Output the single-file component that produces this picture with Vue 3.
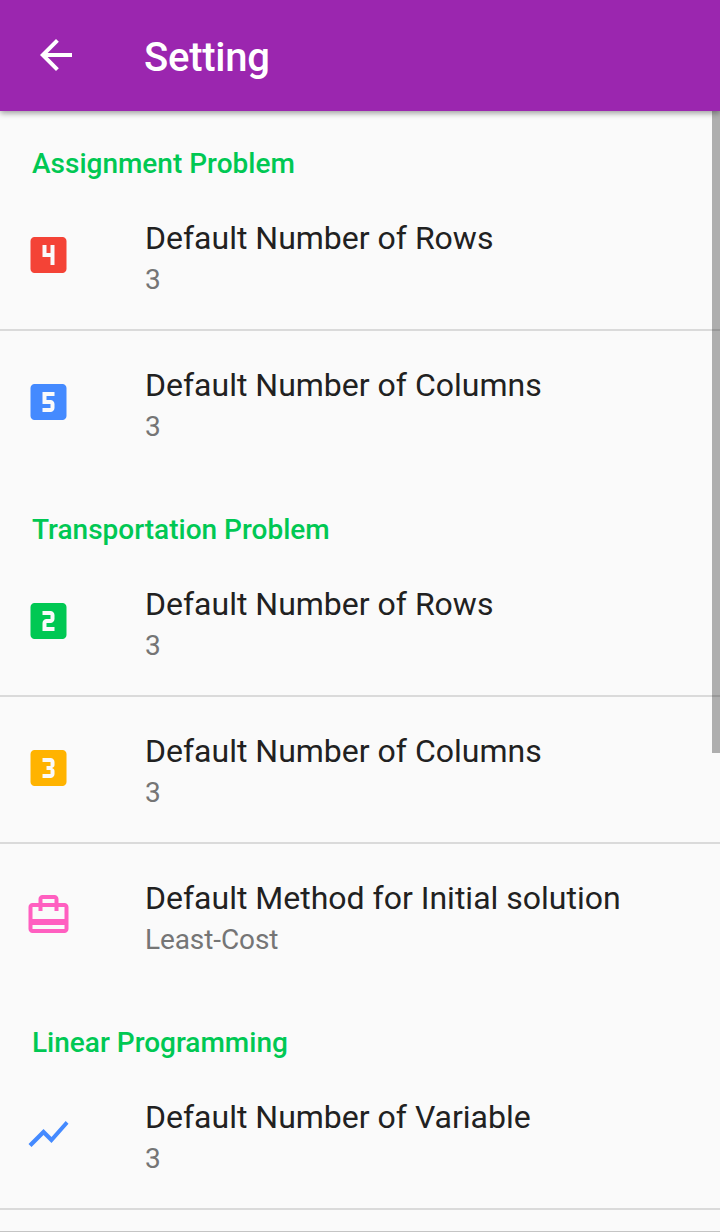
<script setup>
const box = 'M19 3H5c-1.1 0-2 .9-2 2v14c0 1.1.9 2 2 2h14c1.1 0 2-.9 2-2V5c0-1.1-.9-2-2-2z'
const icons = {
  two: box + 'm-4 8c0 1.11-.9 2-2 2h-2v2h4v2H9v-4c0-1.11.9-2 2-2h2V9H9V7h4c1.1 0 2 .89 2 2v2z',
  three: 'M19.01 3h-14c-1.1 0-2 .9-2 2v14c0 1.1.9 2 2 2h14c1.1 0 2-.9 2-2V5c0-1.1-.9-2-2-2zm-4 7.5c0 .83-.67 1.5-1.5 1.5.83 0 1.5.67 1.5 1.5V15c0 1.11-.9 2-2 2h-4v-2h4v-2h-2v-2h2V9h-4V7h4c1.1 0 2 .89 2 2v1.5z',
  four: box + 'm-4 14h-2v-4H9V7h2v4h2V7h2v10z',
  five: box + 'm-4 6h-4v2h2c1.1 0 2 .89 2 2v2c0 1.11-.9 2-2 2H9v-2h4v-2H9V7h6v2z',
  trip: 'M20 6h-3V4c0-1.11-.89-2-2-2H9c-1.11 0-2 .89-2 2v2H4c-1.11 0-2 .89-2 2v11c0 1.11.89 2 2 2h16c1.11 0 2-.89 2-2V8c0-1.11-.89-2-2-2zM9 4h6v2H9V4zm11 15H4v-2h16v2zm0-5H4V8h3v2h2V8h6v2h2V8h3v6z',
  chart: 'M3.5 18.49l6-6.01 4 4L22 6.92l-1.41-1.41-7.09 7.97-4-4L2 16.99z',
}
const rows = { title: 'Default Number of Rows', value: '3' }
const columns = { title: 'Default Number of Columns', value: '3' }
const sections = [
  { title: 'Assignment Problem', items: [
    { ...rows, icon: 'four', tone: 'red' },
    { ...columns, icon: 'five', tone: 'blue' },
  ] },
  { title: 'Transportation Problem', items: [
    { ...rows, icon: 'two', tone: 'green' },
    { ...columns, icon: 'three', tone: 'amber' },
    { title: 'Default Method for Initial solution', value: 'Least-Cost', icon: 'trip', tone: 'pink' },
  ] },
  { title: 'Linear Programming', open: true, items: [
    { title: 'Default Number of Variable', value: '3', icon: 'chart', tone: 'blue' },
  ] },
]
</script>

<template>
  <div class="screen">
    <header class="bar">
      <svg class="back" viewBox="0 0 24 24"><path d="M20 11H7.83l5.59-5.59L12 4l-8 8 8 8 1.41-1.41L7.83 13H20v-2z" /></svg>
      <h1>Setting</h1>
    </header>
    <main>
      <section v-for="s in sections" :key="s.title" :class="{ open: s.open }">
        <h2>{{ s.title }}</h2>
        <div v-for="i in s.items" :key="i.title" class="item">
          <svg class="icon" :class="i.tone" viewBox="0 0 24 24"><path :d="icons[i.icon]" /></svg>
          <div>
            <div class="title">{{ i.title }}</div>
            <div class="value">{{ i.value }}</div>
          </div>
        </div>
      </section>
    </main>
    <div class="scrollbar"></div>
  </div>
</template>

<style>
body { margin: 0; }
</style>

<style scoped>
.screen {
  position: relative;
  box-sizing: border-box;
  width: 720px;
  height: 1232px;
  overflow: hidden;
  border-bottom: 1px solid #c4c4c4;
  background: #fafafa;
  font-family: Roboto, sans-serif;
}
.bar {
  display: flex;
  align-items: center;
  box-sizing: border-box;
  height: 111px;
  padding-left: 32px;
  background: #9b26af;
  box-shadow: 0 2px 6px rgba(0, 0, 0, 0.4);
}
.back { width: 48px; height: 48px; margin-bottom: 1px; fill: #fff; }
h1 {
  margin: 4px 0 0 64px;
  color: #fff;
  font-size: 40px;
  font-weight: 500;
  line-height: 48px;
  letter-spacing: -0.25px;
}
h2 {
  box-sizing: border-box;
  height: 73px;
  margin: 0;
  padding: 34px 32px 0;
  color: #00c853;
  font-size: 28px;
  font-weight: 500;
  line-height: 38px;
}
.item {
  display: flex;
  align-items: flex-start;
  box-sizing: border-box;
  height: 147px;
  padding: 33px 24px 0;
  border-bottom: 2px solid #dadada;
}
section:not(.open) .item:last-child { height: 146px; border-bottom-color: transparent; }
.icon { width: 49px; height: 48px; margin: 14px 72px 0 0; }
.title { color: #212121; font-size: 32px; line-height: 42px; }
.value { margin-top: 2px; color: #757575; font-size: 28px; line-height: 38px; letter-spacing: -0.1px; }
.red { fill: #f44336; }
.blue { fill: #448aff; }
.green { fill: #00c853; }
.amber { fill: #ffb300; }
.pink { fill: #ff5fc0; }
.scrollbar {
  position: absolute;
  top: 111px;
  right: 0;
  width: 8px;
  height: 642px;
  background: rgba(0, 0, 0, 0.3);
}
</style>
